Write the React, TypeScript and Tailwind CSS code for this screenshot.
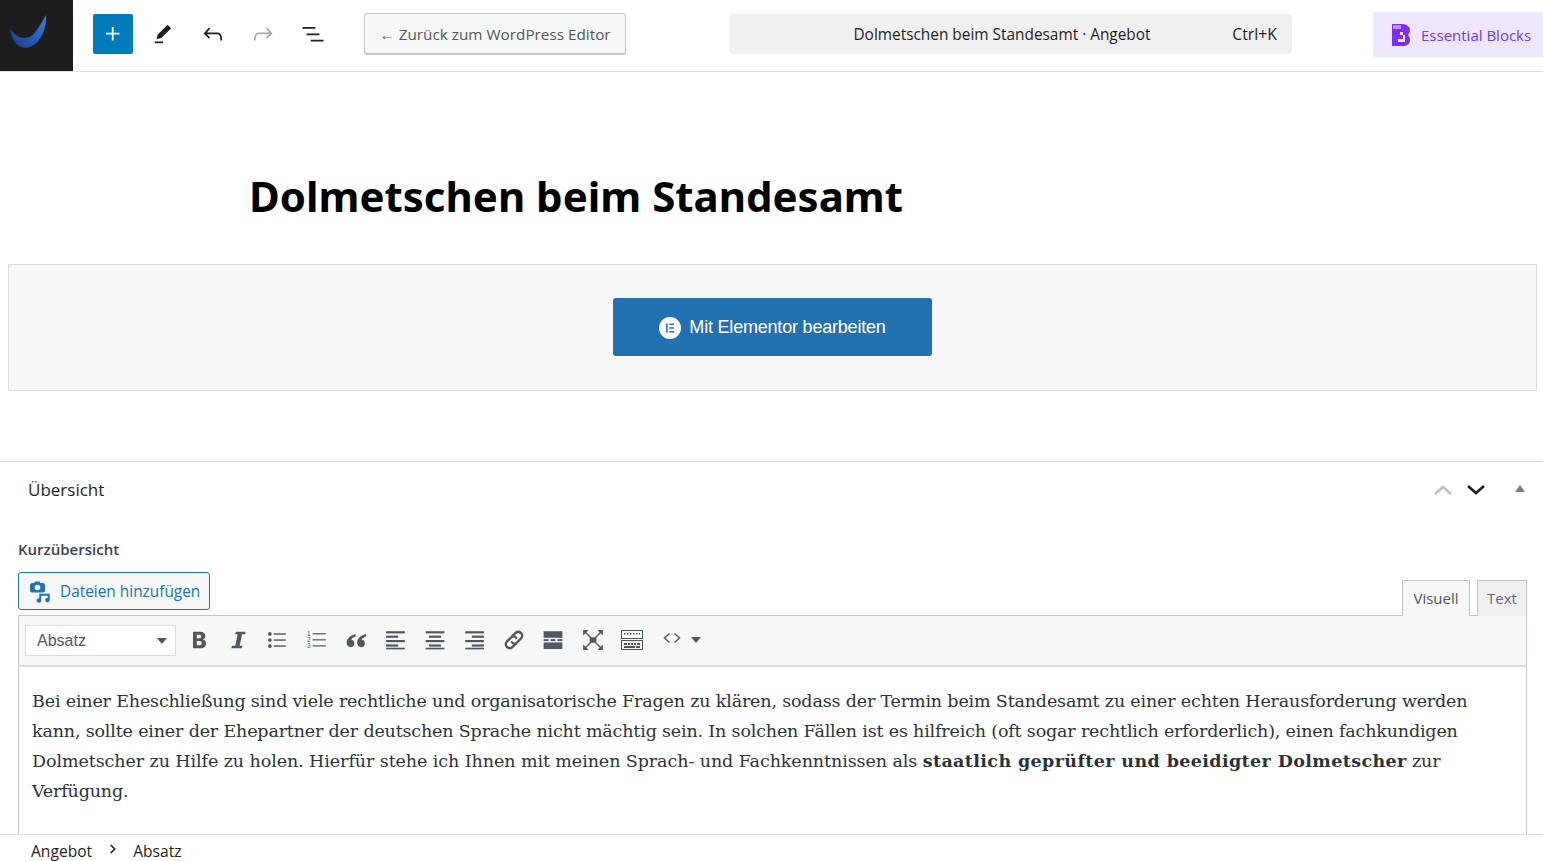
import React from 'react'
import { ChevronRight } from 'lucide-react'

const ui = { fontFamily: '"Open Sans", sans-serif' }

function WpIcon({ d, className = '' }: { d: string; className?: string }) {
  return (
    <svg viewBox="0 0 24 24" width="24" height="24" fill="currentColor" className={className}>
      <path d={d} />
    </svg>
  )
}

function HeaderButton({ d, muted }: { d: string; muted?: boolean }) {
  return (
    <button className={`flex h-10 w-10 items-center justify-center ${muted ? 'text-[#a7aaad]' : 'text-[#1e1e1e]'}`}>
      <WpIcon d={d} className="h-[28px] w-[28px]" />
    </button>
  )
}

function Logo() {
  return (
    <svg viewBox="0 0 73 71" width="73" height="71">
      <defs>
        <linearGradient id="swoosh" x1="0" y1="1" x2="1" y2="0">
          <stop offset="0" stopColor="#1a3d85" />
          <stop offset="0.6" stopColor="#2b62c4" />
          <stop offset="1" stopColor="#3f7ee0" />
        </linearGradient>
        <filter id="soft"><feGaussianBlur stdDeviation="0.6" /></filter>
      </defs>
      <path d="M10 28c3 6 8 10 15 10 8 0 13-9 21-23 1 10-3 23-11 29-5 4-11 5-16 2-5-3-8-10-9-18z" fill="url(#swoosh)" filter="url(#soft)" />
    </svg>
  )
}

function EssentialIcon() {
  return (
    <svg viewBox="0 0 18 22" width="18" height="22">
      <path d="M0 0h10c5 0 8 3 8 6 0 2-1 4-2 5 1 1 2 3 2 5 0 4-3 6-8 6H0z" fill="#7b2ff0" />
      <path d="M1 1h8v4H1z" fill="#c58af5" />
      <path d="M8 8h3v7H6v3h7v-7H8z" fill="#efe6fb" />
    </svg>
  )
}

function ElementorIcon() {
  return (
    <svg viewBox="0 0 22 22" width="22" height="22">
      <circle cx="11" cy="11" r="11" fill="#fff" />
      <path d="M7 6.500h1.600v9H7zM10.200 6.500H15v1.600h-4.800zM10.200 10.200H15v1.600h-4.800zM10.200 13.900H15v1.600h-4.800z" fill="#2271b1" />
    </svg>
  )
}

function MediaIcon() {
  return (
    <svg viewBox="0 0 22 22" width="22" height="22" fill="#2271b1" className="shrink-0">
      <path d="M3 2h2l1-1.500h4.500L11.500 2H14c1 0 2 1 2 2v5.500c0 1-1 2-2 2H3c-1 0-2-1-2-2V4c0-1 1-2 2-2z" />
      <circle cx="8.500" cy="6.500" r="2.800" fill="#f6f7f7" />
      <path d="M10 12.500h11V19a2.500 2.500 0 1 1-2.500-2.500V15h-6v4.500a2.500 2.500 0 1 1-2.500-2.500z" stroke="#f6f7f7" strokeWidth="0.5" />
    </svg>
  )
}

const lines = (ys: number[], spans: [number, number][]) =>
  ys.map((y, i) => <rect key={i} x={spans[i][0]} y={y} width={spans[i][1]} height="2" />)

function Tool({ children }: { children: React.ReactNode }) {
  return (
    <span className="flex h-6 w-[39.4px] items-center justify-center text-[#50575e]">
      <svg viewBox="0 0 20 20" width="22" height="22" fill="currentColor">
        {children}
      </svg>
    </span>
  )
}

function Toolbar() {
  return (
    <div className="flex h-[52px] items-center border-t border-b-2 border-l border-r border-t-[#c3c4c7] border-b-[#dcdcde] border-l-[#c3c4c7] border-r-[#c9c3d6] bg-[#f6f7f7] pl-[6px] pb-px">
      <div className="mr-[3px] flex h-[31px] w-[151px] items-center justify-between border border-[#dcdcde] bg-white pl-[11px] pr-2 pt-px text-[16px] text-[#50575e]" style={{ fontFamily: '"Liberation Sans", sans-serif' }}>
        <span>Absatz</span>
        <span className="h-0 w-0 border-x-[5px] border-t-[6px] border-x-transparent border-t-[#50575e]" />
      </div>
      <Tool><path fillRule="evenodd" d="M4.500 2.500h6.300c3.300 0 5 1.500 5 3.900 0 1.600-.9 2.700-2.300 3.200 1.800.4 2.900 1.700 2.900 3.500 0 2.800-2 4.400-5.200 4.400H4.500zm3.500 2.700v3.300h2c1.300 0 2-.6 2-1.700s-.7-1.600-2-1.600zm0 5.700v3.900h2.300c1.500 0 2.200-.7 2.200-2s-.7-1.900-2.200-1.900z" /></Tool>
      <Tool><path d="M8 2.500h9l-.5 2.300h-2.800l-2.200 10.400H14l-.5 2.300H4l.5-2.300h3L9.700 4.800H7.500z" /></Tool>
      <Tool>
        <circle cx="3.500" cy="4.500" r="1.700" />
        <circle cx="3.500" cy="10" r="1.700" />
        <circle cx="3.500" cy="15.500" r="1.700" />
        <rect x="7" y="3.900" width="11" height="1.300" />
        <rect x="7" y="9.400" width="11" height="1.300" />
        <rect x="7" y="14.900" width="11" height="1.300" />
      </Tool>
      <Tool>
        <text x="1" y="6.500" fontSize="6" fontFamily="Liberation Sans">1</text>
        <text x="1" y="12" fontSize="6" fontFamily="Liberation Sans">2</text>
        <text x="1" y="17.500" fontSize="6" fontFamily="Liberation Sans">3</text>
        <rect x="6" y="3.800" width="12" height="1.100" />
        <rect x="6" y="9.300" width="12" height="1.100" />
        <rect x="6" y="14.800" width="12" height="1.100" />
      </Tool>
      <Tool><path d="M9.300 4.500C5 6 1.500 8.500 1.500 12.500c0 2.500 1.600 4 3.600 4s3.500-1.500 3.500-3.400-1.400-3.200-3-3.300c.3-1.200 2-2.500 4.300-3.300zM18.800 4.500c-4.300 1.500-7.800 4-7.800 8 0 2.500 1.600 4 3.600 4s3.500-1.500 3.500-3.400-1.400-3.200-3-3.300c.3-1.200 2-2.500 4.300-3.300z" /></Tool>
      <Tool>{lines([2, 6, 10, 14], [[1, 17], [1, 11], [1, 17], [1, 11]])}<rect x="1" y="17" width="17" height="1.500" /></Tool>
      <Tool>{lines([2, 6, 10, 14], [[1.500, 17], [4.500, 11], [1.500, 17], [4.500, 11]])}<rect x="1.500" y="17" width="17" height="1.500" /></Tool>
      <Tool>{lines([2, 6, 10, 14], [[2, 17], [8, 11], [2, 17], [8, 11]])}<rect x="2" y="17" width="17" height="1.500" /></Tool>
      <Tool>
        <g fill="none" stroke="currentColor" strokeWidth="2.100" strokeLinecap="round">
          <path d="M8.500 6.500l3-3a3.300 3.300 0 0 1 4.700 0l.3.300a3.300 3.300 0 0 1 0 4.700l-4 4a3 3 0 0 1-4.500-.5" />
          <path d="M11.500 13.500l-3 3a3.300 3.300 0 0 1-4.700 0l-.3-.3a3.300 3.300 0 0 1 0-4.700l4-4a3 3 0 0 1 4.500.5" />
        </g>
      </Tool>
      <Tool>
        <rect x="1.500" y="2" width="17" height="6" />
        <rect x="1.500" y="9.200" width="4.500" height="1.800" />
        <rect x="7.700" y="9.200" width="4.500" height="1.800" />
        <rect x="14" y="9.200" width="4.500" height="1.800" />
        <rect x="1.500" y="12.200" width="17" height="6" />
      </Tool>
      <Tool>
        <rect x="7" y="7.500" width="6" height="5" />
        <g fill="none" stroke="currentColor" strokeWidth="1.300">
          <path d="M3 3l5 5M17 3l-5 5M3 17l5-5M17 17l-5-5" />
        </g>
        <path d="M1 1h5L1 6zM19 1h-5l5 5zM1 19h5l-5-5zM19 19h-5l5-5z" />
      </Tool>
      <span className="flex h-6 w-[39.4px] items-center justify-center text-[#50575e]">
        <svg viewBox="0 0 24 20" width="24" height="20" fill="currentColor">
          <path fillRule="evenodd" d="M1 0h22v9H1zM2 1v7h20V1zM1 10h22v10H1zM2 11v8h20v-8z" />
          <path d="M4 3h1.500v1.500H4zM7 3h1.500v1.500H7zM10 3h1.500v1.500H10zM13 3h1.500v1.500H13zM16 3h1.500v1.500H16zM19 3h1v1.500h-1zM4 13h3v2H4zM8 13h2v2H8zM11 13h2v2h-2zM14 13h2v2h-2zM17 13h3v2h-3zM4 16h11v2H4zM16 16h4v2h-4z" />
        </svg>
      </span>
      <span className="flex h-6 w-[39.4px] items-center justify-center pl-[2px] text-[#50575e]">
        <svg viewBox="0 0 20 20" width="20" height="20" fill="none" stroke="currentColor" strokeWidth="1.400" className="-translate-y-px">
          <path d="M7.500 4.500L2.500 9l5 4.500M12.500 4.500l5 4.500-5 4.500" />
        </svg>
      </span>
      <span className="h-0 w-0 border-x-[5px] border-t-[6px] border-x-transparent border-t-[#50575e]" />
    </div>
  )
}

export default function App() {
  return (
    <div className="flex h-[861px] flex-col overflow-hidden bg-white" style={ui}>
      <header className="flex h-[72px] shrink-0 items-center border-b border-[#e0e0e0] bg-white pb-[3px]">
        <div className="h-[71px] w-[73px] shrink-0 self-start bg-[#1e1e1e]">
          <Logo />
        </div>
        <button className="ml-5 mr-[10px] flex h-10 w-10 items-center justify-center rounded-[2px] bg-[#007cba] text-white">
          <WpIcon d="M11 12.500V17.500H12.500V12.500H17.500V11H12.500V6H11V11H6V12.500H11Z" className="h-[28px] w-[28px]" />
        </button>
        <div className="flex gap-[10px]">
          <HeaderButton d="m19 7-3-3-8.500 8.500-1 4 4-1L19 7Zm-7 11.500H5V20h7v-1.500Z" />
          <HeaderButton d="M18.300 11.700c-.6-.6-1.400-.9-2.300-.9H6.700l2.900-3.300-1.100-1-4.500 5L8.500 16l1-1-2.700-2.700H16c.5 0 .9.2 1.300.5 1 1 1 3.400 1 4.500v.3h1.500v-.2c0-1.500 0-4.300-1.500-5.700z" />
          <HeaderButton muted d="M15.600 6.500l-1.100 1 2.900 3.300H8c-.9 0-1.700.3-2.300.9-1.400 1.500-1.400 4.200-1.400 5.600v.2h1.500v-.3c0-1.100 0-3.500 1-4.500.3-.3.7-.5 1.300-.5h9.200L14.500 15l1.100 1.100 4.600-4.600-4.600-5z" />
          <HeaderButton d="M3 6h11v1.500H3V6Zm3.500 5.500h11V13h-11v-1.500ZM21 17H10v1.500h11V17Z" />
        </div>
        <button className="ml-[31px] flex h-[42px] w-[262px] items-center justify-center rounded-[3px] border border-b-2 border-[#c3c4c7] bg-[#f6f7f7] pt-px text-[15.300px] text-[#50575e]">
          ← Zurück zum WordPress Editor
        </button>
        <div className="relative ml-[103px] flex h-10 w-[563px] items-center justify-center rounded-[4px] bg-[#f0f0f0] pt-px text-[15.400px] text-[#1e1e1e]">
          <span className="mr-[17px]">Dolmetschen beim Standesamt · Angebot</span>
          <span className="absolute right-[15px] text-[15.800px]">Ctrl+K</span>
        </div>
        <div className="ml-auto flex h-[45px] w-[170px] items-center gap-[11px] rounded-l-[2px] bg-[#efe6fb] pl-[19px] pt-[2px] text-[15px] text-[#6a3df0]">
          <EssentialIcon />
          <span className="whitespace-nowrap">Essential Blocks</span>
        </div>
      </header>

      <main className="min-h-0 flex-1 overflow-hidden">
        <h1 className="pl-[249px] pt-[99px] pb-[43px] text-[42px] font-bold leading-[50px] text-black whitespace-nowrap" style={{ fontFamily: '"Noto Sans", sans-serif' }}>
          Dolmetschen beim Standesamt
        </h1>

        <div className="ml-2 mr-[6px] flex h-[127px] items-center justify-center border border-[#dcdcde] bg-[#f7f7f7]">
          <button className="mb-[2px] flex h-[58px] w-[319px] items-center justify-center gap-2 rounded-[3px] bg-[#2271b1] pt-[2px] text-[18px] text-white" style={{ fontFamily: '"Liberation Sans", sans-serif' }}>
            <ElementorIcon />
            <span className="tracking-[-0.2px]">Mit Elementor bearbeiten</span>
          </button>
        </div>

        <section className="mt-[70px] border-t border-[#e0e0e0]">
          <div className="flex h-[56px] items-center justify-between pl-7 pr-[18px]">
            <h2 className="text-[17px] font-medium text-[#1e1e1e]">Übersicht</h2>
            <div className="flex items-center">
              <svg viewBox="0 0 20 12" width="20" height="12" fill="none" stroke="#c3bdc9" strokeWidth="2.500"><path d="M2 10l8-7 8 7" /></svg>
              <svg viewBox="0 0 20 12" width="20" height="12" fill="none" stroke="#1e1e1e" strokeWidth="2.500" className="ml-[13px]"><path d="M2 2l8 7 8-7" /></svg>
              <span className="ml-[29px] mb-[3px] h-0 w-0 border-x-[5px] border-b-[7px] border-x-transparent border-b-[#787c82]" />
            </div>
          </div>

          <div className="pl-[18px] pr-4">
            <div className="pt-[22px] pb-[13px] text-[15px] font-semibold leading-[19px] text-[#3c434a]">Kurzübersicht</div>
            <div className="flex items-end justify-between">
              <button className="mb-[5px] flex h-[38px] w-[192px] items-center gap-[9px] rounded-[3px] border border-[#2271b1] bg-[#f6f7f7] pl-[10px] pt-px text-[15.400px] text-[#2271b1]">
                <MediaIcon />
                Dateien hinzufügen
              </button>
              <div className="relative z-10 -mb-px flex items-end gap-[7px]">
                <span className="flex h-9 w-[68px] items-center justify-center border border-b-0 border-[#c3c4c7] bg-[#f6f7f7] text-[15px] text-[#50575e]">Visuell</span>
                <span className="flex h-9 w-[50px] items-center justify-center border border-b-0 border-[#c3c4c7] bg-[#f0f0f1] text-[15px] text-[#646970]">Text</span>
              </div>
            </div>
            <Toolbar />
            <div className="h-[200px] border-x border-[#c3c4c7] border-r-[#c9c3d6] bg-white pl-[13px] pt-[19px] text-[17.500px] leading-[30px] tracking-[-0.17px] text-[#2c3338] whitespace-nowrap" style={{ fontFamily: '"DejaVu Serif", serif' }}>
              Bei einer Eheschließung sind viele rechtliche und organisatorische Fragen zu klären, sodass der Termin beim Standesamt zu einer echten Herausforderung werden<br />
              kann, sollte einer der Ehepartner der deutschen Sprache nicht mächtig sein. In solchen Fällen ist es hilfreich (oft sogar rechtlich erforderlich), einen fachkundigen<br />
              <span className="tracking-[-0.08px]">Dolmetscher zu Hilfe zu holen. Hierfür stehe ich Ihnen mit meinen Sprach- und Fachkenntnissen als </span>
              <strong className="tracking-[0.38px]">staatlich geprüfter und beeidigter Dolmetscher</strong> zur<br />
              Verfügung.
            </div>
          </div>
        </section>
      </main>

      <footer className="flex h-[27px] shrink-0 items-center border-t border-[#e0e0e0] bg-white pl-[31px] pt-[7px] text-[15.600px] text-[#1e1e1e]">
        <span>Angebot</span>
        <ChevronRight size={14} strokeWidth={3} className="ml-[14px] mr-[13px] -translate-y-[3px]" />
        <span>Absatz</span>
      </footer>
    </div>
  )
}
